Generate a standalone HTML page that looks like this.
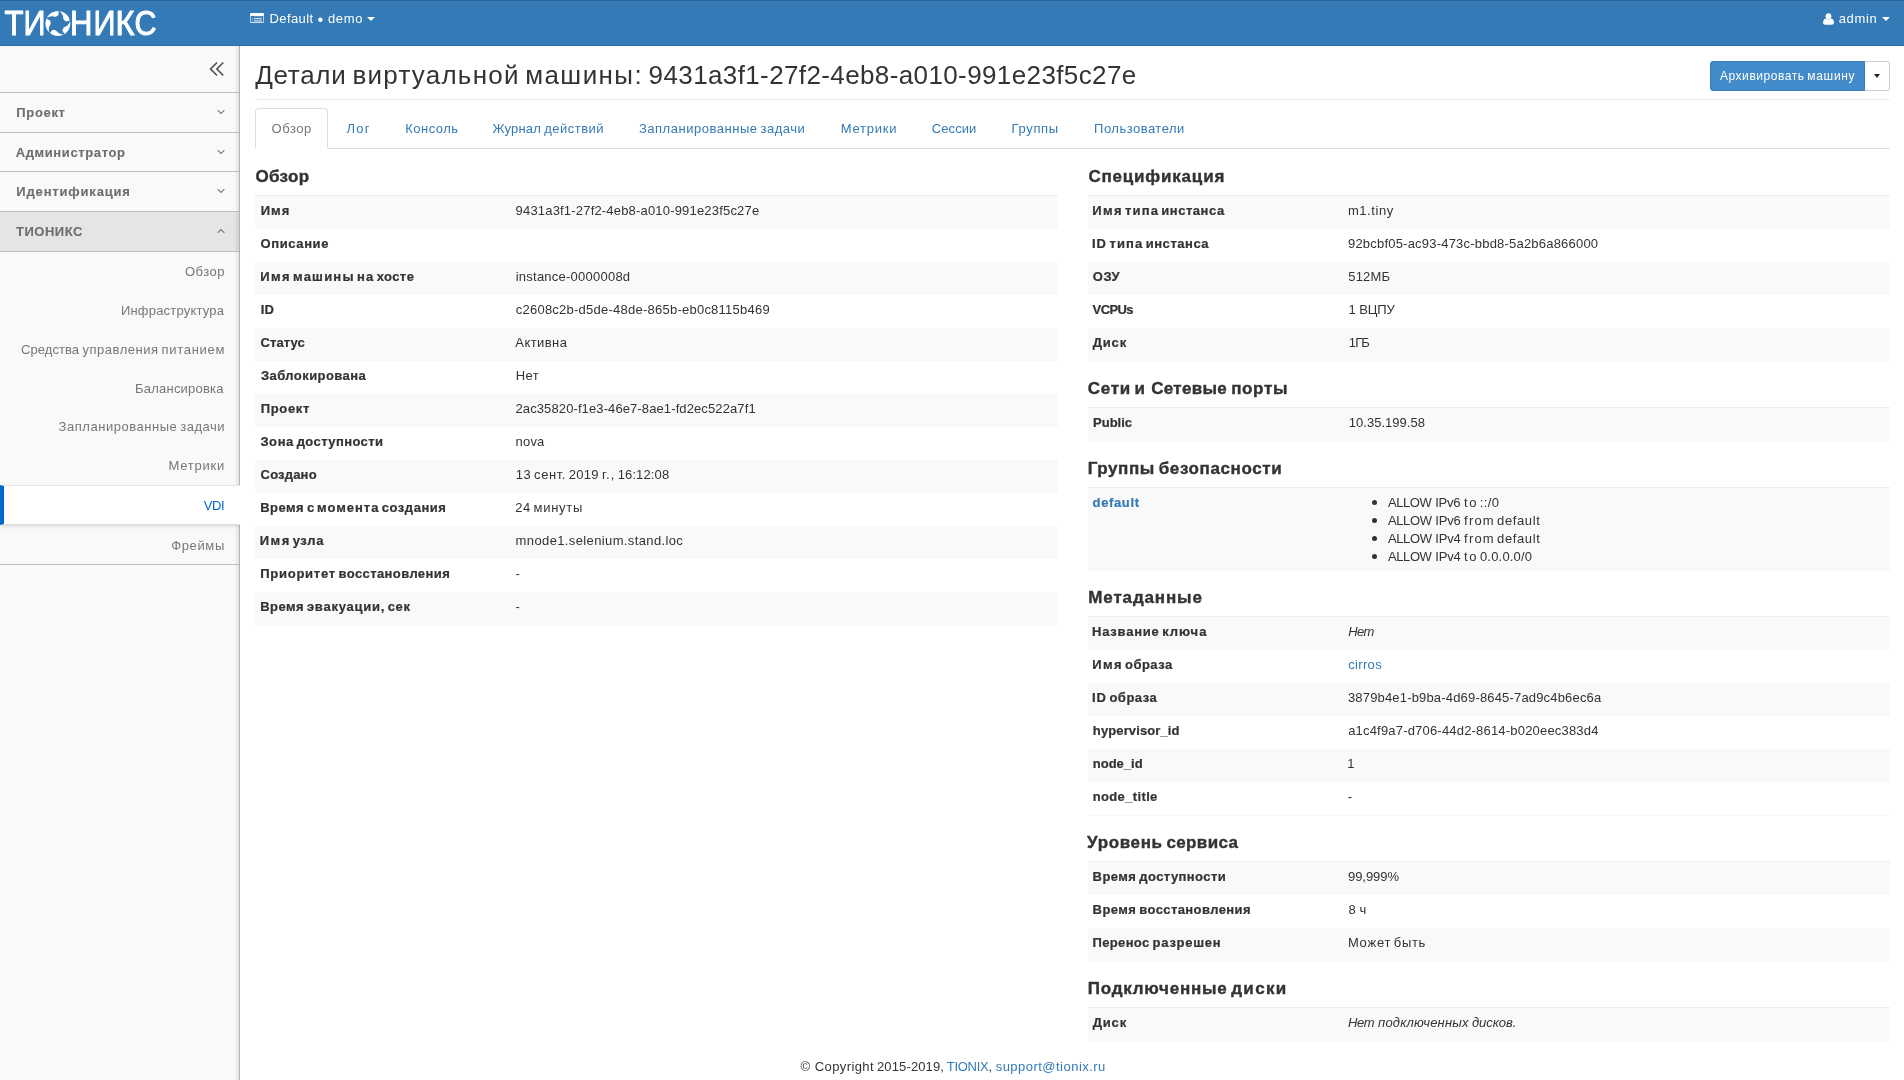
<!DOCTYPE html>
<html lang="ru"><head>
<meta charset="utf-8">
<title>Детали виртуальной машины</title>
<style>
*{box-sizing:border-box;}
html,body{margin:0;padding:0;}
body{will-change:transform;width:1904px;height:1080px;overflow:hidden;background:#fff;color:#333;font-family:"Liberation Sans",sans-serif;font-size:13px;line-height:18px;position:relative;}
a{color:#337ab7;text-decoration:none;}
.f,.fr{position:absolute;white-space:nowrap;line-height:18px;}
.fr{text-align:right;}
#nav{position:absolute;left:0;top:0;width:1904px;height:46px;background:#337ab7;border-bottom:1px solid #2e6da4;border-top:1px solid #2b669a;color:#fff;}
#logo{position:absolute;left:0;top:0;}
.caret{position:absolute;width:0;height:0;border-top:4px solid currentColor;border-left:4px solid transparent;border-right:4px solid transparent;}
#side{position:absolute;left:0;top:46px;width:240px;height:1034px;background:#f9f9f9;overflow:hidden;}
#sbd{position:absolute;left:234px;top:0;width:6px;height:1034px;border-right:1px solid #b4b4b4;background:linear-gradient(to right,rgba(0,0,0,0),rgba(0,0,0,.09));}
#side .tog{position:absolute;left:209px;top:15px;}
.ln{position:absolute;left:0;width:239px;height:1px;background:#bdbdbd;}
.grp{font-weight:bold;color:#6e6e6e;-webkit-text-stroke:.12px;}
.chev{position:absolute;left:217px;}
#open{position:absolute;left:0;top:166px;width:239px;height:39px;background:#e4e5e7;}
.itm{color:#777;}
#act{position:absolute;left:0;top:439px;width:240px;height:40px;background:#fff;border-left:4px solid #0068cc;border-top:1px solid #e8e8e8;border-bottom:1px solid #dcdcdc;box-shadow:0 2px 3px rgba(0,0,0,.10);}
#main{position:absolute;left:0;top:0;width:1904px;height:1080px;}
h1{position:absolute;left:0;top:0;margin:0;font-weight:normal;font-size:26px;color:#333;}
h1 .f{line-height:36px;}
.hr{position:absolute;left:255px;width:1635px;height:1px;background:#eee;}
#b1{position:absolute;left:1710px;top:61px;width:155px;height:30px;background:#428bca;border:1px solid #357ebd;border-radius:3px 0 0 3px;}
#b1t{color:#fff;font-size:12px;}
#b2{position:absolute;left:1865px;top:61px;width:25px;height:30px;background:#fff;border:1px solid #ccc;border-left:0;border-radius:0 3px 3px 0;}
#b2 i{position:absolute;left:9px;top:12px;width:0;height:0;border-top:4px solid #222;border-left:3.7px solid transparent;border-right:3.7px solid transparent;}
#tabon{position:absolute;left:255px;top:108px;width:73px;height:41px;border:1px solid #ddd;border-bottom:1px solid #fff;border-radius:4px 4px 0 0;background:#fff;}
.tab{color:#337ab7;}
h4{margin:0;font-size:17px;font-weight:bold;color:#333;-webkit-text-stroke:.4px;}
h4.f{line-height:24px;}
.row{position:absolute;width:802px;}
.row.s{background:#f9f9f9;}
.tl{position:absolute;width:802px;height:1px;background:#eee;}
.k{font-weight:bold;-webkit-text-stroke:.22px;}
i{font-style:italic;}
ul{position:absolute;margin:0;padding:0;list-style:none;}
.dot{position:absolute;width:5.4px;height:5.4px;border-radius:50%;background:#333;}
</style>
</head>
<body>
<div id="nav">
<svg id="logo" width="170" height="45" viewBox="0 0 170 45" role="img" aria-label="ТИОНИКС"><title>ТИОНИКС</title>
<g fill="#fff" stroke="#fff" stroke-width="1" stroke-linejoin="round" font-family="Liberation Sans, sans-serif" font-size="34.6">
<text x="4.6" y="34.4" textLength="19" lengthAdjust="spacingAndGlyphs">Т</text>
<text x="23.4" y="34.4" textLength="22" lengthAdjust="spacingAndGlyphs">И</text>
<text x="70" y="34.4" textLength="22.4" lengthAdjust="spacingAndGlyphs">Н</text>
<text x="93.4" y="34.4" textLength="22" lengthAdjust="spacingAndGlyphs">И</text>
<text x="115.5" y="34.4" textLength="19" lengthAdjust="spacingAndGlyphs">К</text>
<text x="134.6" y="34.4" textLength="22" lengthAdjust="spacingAndGlyphs">С</text>
</g>
<path fill="#fff" d="M59.58 10.22 L60.48 10.38 L61.37 10.61 L62.24 10.90 L63.09 11.26 L63.91 11.68 L64.69 12.16 L65.44 12.70 L66.15 13.29 L66.81 13.93 L67.42 14.61 L67.98 15.34 L68.48 16.11 L68.92 16.92 L69.31 17.75 L69.63 18.62 L69.88 19.50 L65.90 20.49 L65.42 20.01 L64.90 19.58 L64.45 19.17 L64.03 18.79 L63.58 18.45 L63.45 17.89 L63.30 17.28 L63.23 16.52 L63.12 15.69 L62.91 14.86 L62.59 14.03 L62.18 13.22 L61.67 12.42 L61.06 11.65 L60.37 10.91 L59.58 10.22Z M70.06 20.35 L70.19 21.26 L70.25 22.18 L70.24 23.09 L70.16 24.01 L70.01 24.92 L69.80 25.81 L69.52 26.69 L69.18 27.54 L68.77 28.37 L68.31 29.16 L67.79 29.92 L67.21 30.64 L66.58 31.31 L65.90 31.93 L65.18 32.50 L64.42 33.02 L62.25 29.54 L62.56 28.92 L62.81 28.30 L63.05 27.75 L63.29 27.23 L63.48 26.70 L63.97 26.40 L64.49 26.07 L65.20 25.77 L65.95 25.41 L66.68 24.95 L67.37 24.39 L68.02 23.75 L68.62 23.02 L69.16 22.20 L69.65 21.31 L70.06 20.35Z M63.67 33.45 L62.84 33.85 L61.99 34.19 L61.11 34.46 L60.22 34.67 L59.31 34.81 L58.39 34.89 L57.47 34.89 L56.55 34.83 L55.64 34.70 L54.75 34.51 L53.86 34.24 L53.00 33.91 L52.17 33.52 L51.37 33.07 L50.61 32.56 L49.88 32.00 L52.51 28.86 L53.20 28.97 L53.86 29.01 L54.47 29.07 L55.03 29.13 L55.59 29.15 L56.03 29.52 L56.51 29.92 L57.01 30.50 L57.59 31.10 L58.25 31.66 L58.99 32.14 L59.80 32.55 L60.69 32.90 L61.63 33.17 L62.63 33.35 L63.67 33.45Z M49.24 31.42 L48.60 30.76 L48.01 30.05 L47.48 29.30 L47.00 28.51 L46.59 27.69 L46.24 26.84 L45.95 25.97 L45.72 25.08 L45.56 24.17 L45.47 23.26 L45.45 22.34 L45.50 21.42 L45.61 20.51 L45.79 19.61 L46.04 18.72 L46.35 17.85 L50.15 19.39 L50.26 20.07 L50.43 20.72 L50.56 21.31 L50.67 21.87 L50.83 22.41 L50.61 22.94 L50.38 23.52 L49.98 24.17 L49.59 24.91 L49.26 25.71 L49.03 26.56 L48.89 27.47 L48.84 28.41 L48.87 29.39 L49.00 30.40 L49.24 31.42Z M46.70 17.06 L47.14 16.25 L47.63 15.48 L48.18 14.74 L48.78 14.04 L49.43 13.39 L50.13 12.80 L50.87 12.25 L51.65 11.76 L52.46 11.33 L53.31 10.96 L54.17 10.66 L55.06 10.42 L55.96 10.24 L56.88 10.14 L57.80 10.10 L58.71 10.13 L58.43 14.22 L57.82 14.53 L57.25 14.89 L56.73 15.20 L56.23 15.48 L55.77 15.79 L55.19 15.75 L54.57 15.71 L53.83 15.53 L53.01 15.39 L52.14 15.33 L51.26 15.37 L50.36 15.51 L49.44 15.75 L48.52 16.09 L47.61 16.53 L46.70 17.06Z"></path>
</svg>
<svg style="position:absolute;left:250px;top:11.700px" width="14" height="10.700" viewBox="0 0 14 10.700"><rect x=".45" y=".45" width="13.100" height="9.800" rx="1.200" fill="none" stroke="#fff" stroke-width=".9" stroke-opacity=".7"></rect><rect x=".15" y="0" width="13.700" height="2.900" rx="1" fill="#fff"></rect><rect x=".6" y="9.300" width="12.800" height="1.400" rx=".6" fill="#fff"></rect><rect x="4" y="3.400" width="8" height=".8" fill="#fff" fill-opacity=".35"></rect><rect x="4" y="5.300" width="8" height=".9" fill="#fff"></rect><rect x="4" y="7.500" width="8" height=".9" fill="#fff"></rect><rect x="1.900" y="5.300" width="1.200" height=".9" fill="#fff" fill-opacity=".6"></rect><rect x="1.900" y="7.500" width="1.200" height=".9" fill="#fff" fill-opacity=".6"></rect></svg>
<div id="ctx">
<span class="f" style="left: 269.46px; top: 9px; letter-spacing: 0.404px;">Default</span>
<span class="f" style="left: 317.39px; top: 9px; font-size: 16.5px;">•</span>
<span class="f" style="left: 327.92px; top: 9px; letter-spacing: 0.693px;">demo</span>
</div>
<i class="caret" style="left:367px;top:16px"></i>
<svg style="position:absolute;left:1823px;top:11.5px" width="11" height="12" viewBox="0 0 11 12"><circle cx="5.5" cy="3.200" r="2.900" fill="#fff"></circle><path d="M0 9.600C0 6.800 1.800 5.500 3 5.400c.7.600 1.500.9 2.500.9s1.800-.3 2.500-.9c1.200.100 3 1.400 3 4.200 0 1.500-1 2.200-2.200 2.200H2.200C1 11.800 0 11.100 0 9.600z" fill="#fff"></path></svg>
<div class="f" style="left: 1838.65px; top: 9px; letter-spacing: 0.658px;">admin</div>
<i class="caret" style="left:1881.500px;top:16px"></i>
</div>
<div id="side">
<svg class="tog" width="16" height="16" viewBox="0 0 16 16"><path d="M8 1.500L1.600 8 8 14.500M14.300 1.500L7.900 8l6.400 6.500" fill="none" stroke="#4d4d4d" stroke-width="1.600"></path></svg>
<div id="open"></div>
<div id="sbd"></div>
<div class="ln" style="top:46px"></div>
<div class="f grp" style="left: 16.34px; top: 58px; letter-spacing: 0.654px;">Проект</div>
<svg class="chev" style="top:63px" width="8" height="6" viewBox="0 0 8 6"><path d="M.6 1.200l3.400 3.300 3.400-3.300" fill="none" stroke="#777" stroke-width="1.100"></path></svg>
<div class="ln" style="top:86px"></div>
<div class="f grp" style="left: 15.64px; top: 98px; letter-spacing: 0.622px;">Администратор</div>
<svg class="chev" style="top:103px" width="8" height="6" viewBox="0 0 8 6"><path d="M.6 1.200l3.400 3.300 3.400-3.300" fill="none" stroke="#777" stroke-width="1.100"></path></svg>
<div class="ln" style="top:125px"></div>
<div class="f grp" style="left: 16.37px; top: 137px; letter-spacing: 0.818px;">Идентификация</div>
<svg class="chev" style="top:142px" width="8" height="6" viewBox="0 0 8 6"><path d="M.6 1.200l3.400 3.300 3.400-3.300" fill="none" stroke="#777" stroke-width="1.100"></path></svg>
<div class="ln" style="top:165px"></div>
<div class="f grp" style="left: 16.06px; top: 177px; letter-spacing: 0.491px;">ТИОНИКС</div>
<svg class="chev" style="top:182px" width="8" height="6" viewBox="0 0 8 6"><path d="M.6 4.800l3.400-3.300 3.400 3.300" fill="none" stroke="#777" stroke-width="1.100"></path></svg>
<div class="ln" style="top:205px"></div>
<div class="f itm" style="top: 217px; left: 184.89px; letter-spacing: 0.501px;">Обзор</div>
<div class="f itm" style="top: 256px; left: 120.93px; letter-spacing: 0.197px;">Инфраструктура</div>
<div class="f itm" style="top: 295px; left: 21.08px;"><span style="letter-spacing: 0.05px;">Средства</span> <span style="letter-spacing: 0.528px; margin-left: -0.281px;">управления</span> <span style="letter-spacing: 0.721px; margin-left: -0.781px;">питанием</span></div>
<div class="f itm" style="top: 334px; left: 135.03px; letter-spacing: 0.221px;">Балансировка</div>
<div class="f itm" style="top: 372px; left: 58.6px;"><span style="letter-spacing: 0.532px;">Запланированные</span> <span style="letter-spacing: 0.52px; margin-left: -0.781px;">задачи</span></div>
<div class="f itm" style="top: 411px; left: 168.46px; letter-spacing: 0.773px;">Метрики</div>
<div id="act">
</div>
<div class="f itm" style="top: 451px; color: rgb(0, 102, 204); left: 203.77px; letter-spacing: -0.441px;">VDI</div>
<div class="f itm" style="top: 491px; left: 171.26px; letter-spacing: 0.626px;">Фреймы</div>
<div class="ln" style="top:518px"></div>
</div>
<div id="main">
<h1>
<span class="f" style="left: 255.27px; top: 57px;"><span style="letter-spacing: 0.701px;">Детали</span> <span style="letter-spacing: 1.227px; margin-left: -1.172px;">виртуальной</span> <span style="letter-spacing: 1.406px; margin-left: -1.688px;">машины:</span></span>
<span class="f" style="left: 648.61px; top: 57px; letter-spacing: 0.383px;">9431a3f1-27f2-4eb8-a010-991e23f5c27e</span>
</h1>
<div id="b1"></div><div id="b2"><i></i></div>
<div class="f" style="left: 1719.92px; top: 66.5px; color: rgb(255, 255, 255); font-size: 12px;"><span style="letter-spacing: 0.558px;">Архивировать</span> <span style="letter-spacing: 0.701px; margin-left: -0.797px;">машину</span></div>
<div class="hr" style="top:99px"></div>
<div class="hr" style="top:148px;background:#ddd"></div>
<div id="tabon"></div>
<div class="f tab" style="left: 271.59px; top: 120px; color: rgb(119, 119, 119); letter-spacing: 0.547px;">Обзор</div>
<div class="f tab" style="left: 346.49px; top: 120px; letter-spacing: 1.256px;">Лог</div>
<div class="f tab" style="left: 405.23px; top: 120px; letter-spacing: 0.484px;">Консоль</div>
<div class="f tab" style="left: 492.5px; top: 120px;"><span style="letter-spacing: 0.172px;">Журнал</span> <span style="letter-spacing: 0.489px; margin-left: -0.422px;">действий</span></div>
<div class="f tab" style="left: 638.9px; top: 120px;"><span style="letter-spacing: 0.532px;">Запланированные</span> <span style="letter-spacing: 0.52px; margin-left: -0.781px;">задачи</span></div>
<div class="f tab" style="left: 840.81px; top: 120px; letter-spacing: 0.763px;">Метрики</div>
<div class="f tab" style="left: 931.81px; top: 120px; letter-spacing: 0.071px;">Сессии</div>
<div class="f tab" style="left: 1011.45px; top: 120px; letter-spacing: 0.682px;">Группы</div>
<div class="f tab" style="left: 1094.09px; top: 120px; letter-spacing: 0.484px;">Пользователи</div>
<h4 class="f" style="left: 255.38px; top: 164.5px; letter-spacing: 0.375px;">Обзор</h4>
<div class="tl" style="left:255px;top:195px;width:803px"></div>
<div class="row s" style="left:255px;top:196px;height:33px;width:803px"></div>
<div class="f k" style="left: 260.76px; top: 202px; letter-spacing: 0.963px;">Имя</div>
<div class="f" style="left: 515.6px; top: 202px; letter-spacing: 0.184px;">9431a3f1-27f2-4eb8-a010-991e23f5c27e</div>
<div class="f k" style="left: 260.6px; top: 235px; letter-spacing: 0.594px;">Описание</div>
<div class="row s" style="left:255px;top:262px;height:33px;width:803px"></div>
<div class="f k" style="left: 260.26px; top: 268px;"><span style="letter-spacing: 1.422px;">Имя</span> <span style="letter-spacing: 1.199px; margin-left: -1.657px;">машины</span> <span style="letter-spacing: 1.375px; margin-left: -1.422px;">на</span> <span style="letter-spacing: 0.405px; margin-left: -1.625px;">хосте</span></div>
<div class="f" style="left: 515.72px; top: 268px; letter-spacing: 0.237px;">instance-0000008d</div>
<div class="f k" style="left: 260.71px; top: 301px; letter-spacing: 0.17px;">ID</div>
<div class="f" style="left: 515.75px; top: 301px; letter-spacing: 0.24px;">c2608c2b-d5de-48de-865b-eb0c8115b469</div>
<div class="row s" style="left:255px;top:328px;height:33px;width:803px"></div>
<div class="f k" style="left: 260.6px; top: 334px; letter-spacing: 0.045px;">Статус</div>
<div class="f" style="left: 515.35px; top: 334px; letter-spacing: 0.418px;">Активна</div>
<div class="f k" style="left: 260.94px; top: 367px; letter-spacing: 0.432px;">Заблокирована</div>
<div class="f" style="left: 515.81px; top: 367px; letter-spacing: 0.347px;">Нет</div>
<div class="row s" style="left:255px;top:394px;height:33px;width:803px"></div>
<div class="f k" style="left: 260.72px; top: 400px; letter-spacing: 0.656px;">Проект</div>
<div class="f" style="left: 515.5px; top: 400px; letter-spacing: 0.107px;">2ac35820-f1e3-46e7-8ae1-fd2ec522a7f1</div>
<div class="f k" style="left: 260.4px; top: 433px;"><span style="letter-spacing: 0.587px;">Зона</span> <span style="letter-spacing: 0.409px; margin-left: -0.829px;">доступности</span></div>
<div class="f" style="left: 515.62px; top: 433px; letter-spacing: 0.18px;">nova</div>
<div class="row s" style="left:255px;top:460px;height:33px;width:803px"></div>
<div class="f k" style="left: 260.6px; top: 466px; letter-spacing: 0.181px;">Создано</div>
<div class="f" style="left: 515.83px; top: 466px;"><span style="letter-spacing: 0.406px;">13</span> <span style="letter-spacing: 0.562px; margin-left: -0.641px;">сент.</span> <span style="letter-spacing: 0.271px; margin-left: -0.812px;">2019</span> <span style="letter-spacing: 1px; margin-left: -0.5px;">г.,</span> <span style="letter-spacing: 0.118px; margin-left: -1.25px;">16:12:08</span></div>
<div class="f k" style="left: 260.28px; top: 499px;"><span style="letter-spacing: 0.434px;">Время</span> <span style="margin-left: -0.687px;">с</span> <span style="letter-spacing: 0.971px; margin-left: -0.781px;">момента</span> <span style="letter-spacing: 0.534px; margin-left: -1.219px;">создания</span></div>
<div class="f" style="left: 515.35px; top: 499px;"><span style="letter-spacing: 0.406px;">24</span> <span style="letter-spacing: 0.695px; margin-left: -0.641px;">минуты</span></div>
<div class="row s" style="left:255px;top:526px;height:33px;width:803px"></div>
<div class="f k" style="left: 259.85px; top: 532px;"><span style="letter-spacing: 1.422px;">Имя</span> <span style="letter-spacing: 0.672px; margin-left: -1.657px;">узла</span></div>
<div class="f" style="left: 515.62px; top: 532px; letter-spacing: 0.375px;">mnode1.selenium.stand.loc</div>
<div class="f k" style="left: 260.16px; top: 565px;"><span style="letter-spacing: 0.754px;">Приоритет</span> <span style="letter-spacing: 0.401px; margin-left: -1.015px;">восстановления</span></div>
<div class="f" style="left: 515.54px; top: 565px;">-</div>
<div class="row s" style="left:255px;top:592px;height:33px;width:803px"></div>
<div class="f k" style="left: 260.23px; top: 598px;"><span style="letter-spacing: 0.434px;">Время</span> <span style="letter-spacing: 0.748px; margin-left: -0.687px;">эвакуации,</span> <span style="letter-spacing: 0.721px; margin-left: -1px;">сек</span></div>
<div class="f" style="left: 515.54px; top: 598px;">-</div>
<div class="tl" style="left:255px;top:625px;width:803px;background:#f8f8f8"></div>
<h4 class="f" style="left: 1088.41px; top: 164.5px; letter-spacing: 0.808px;">Спецификация</h4>
<div class="tl" style="left:1088px;top:195px;width:802px"></div>
<div class="row s" style="left:1088px;top:196px;height:33px;width:802px"></div>
<div class="f k" style="left: 1092.21px; top: 202px;"><span style="letter-spacing: 1.422px;">Имя</span> <span style="letter-spacing: 1.148px; margin-left: -1.657px;">типа</span> <span style="letter-spacing: 0.529px; margin-left: -1.375px;">инстанса</span></div>
<div class="f" style="left: 1347.94px; top: 202px; letter-spacing: 0.561px;">m1.tiny</div>
<div class="f k" style="left: 1092.07px; top: 235px;"><span style="letter-spacing: 0.93px;">ID</span> <span style="letter-spacing: 1.148px; margin-left: -1.156px;">типа</span> <span style="letter-spacing: 0.529px; margin-left: -1.375px;">инстанса</span></div>
<div class="f" style="left: 1347.99px; top: 235px; letter-spacing: 0.206px;">92bcbf05-ac93-473c-bbd8-5a2b6a866000</div>
<div class="row s" style="left:1088px;top:262px;height:33px;width:802px"></div>
<div class="f k" style="left: 1092.86px; top: 268px; letter-spacing: 0.467px;">ОЗУ</div>
<div class="f" style="left: 1348.27px; top: 268px; letter-spacing: 0.195px;">512МБ</div>
<div class="f k" style="left: 1092.6px; top: 301px; letter-spacing: -0.634px;">VCPUs</div>
<div class="f" style="left: 1348.43px; top: 301px;"><span>1</span> <span style="letter-spacing: -0.14px; margin-left: -0.031px;">ВЦПУ</span></div>
<div class="row s" style="left:1088px;top:328px;height:33px;width:802px"></div>
<div class="f k" style="left: 1092.67px; top: 334px; letter-spacing: 0.848px;">Диск</div>
<div class="f" style="left: 1348.86px; top: 334px; letter-spacing: -0.9px;">1ГБ</div>
<div class="tl" style="left:1088px;top:361px;width:802px;background:#f8f8f8"></div>
<h4 class="f" style="left: 1087.63px; top: 376.5px;"><span style="letter-spacing: 0.749px;">Сети</span> <span style="margin-left: -1.063px;">и</span> <span style="letter-spacing: 0.299px; margin-left: 1.484px;">Сетевые</span> <span style="letter-spacing: 0.642px; margin-left: -0.61px;">порты</span></h4>
<div class="tl" style="left:1088px;top:407px;width:802px"></div>
<div class="row s" style="left:1088px;top:408px;height:33px;width:802px"></div>
<div class="f k" style="left: 1093.01px; top: 414px; letter-spacing: 0.015px;">Public</div>
<div class="f" style="left: 1348.86px; top: 414px; letter-spacing: 0.009px;">10.35.199.58</div>
<div class="tl" style="left:1088px;top:441px;width:802px;background:#f8f8f8"></div>
<h4 class="f" style="left: 1087.76px; top: 456.5px;"><span style="letter-spacing: 0.585px;">Группы</span> <span style="letter-spacing: 0.604px; margin-left: -0.891px;">безопасности</span></h4>
<div class="tl" style="left:1088px;top:487px;width:802px"></div>
<div class="row s" style="left:1088px;top:488px;height:82px;width:802px"></div>
<div class="f k" style="left: 1092.59px; top: 494px; letter-spacing: 0.641px;"><a>default</a></div>
<div class="dot" style="left:1371.8px;top:499.8px"></div>
<div class="f" style="left: 1387.9px; top: 494px;"><span style="letter-spacing: -0.398px;">ALLOW</span> <span style="letter-spacing: -0.212px; margin-left: 0.187px;">IPv6</span> <span style="letter-spacing: 1.625px; margin-left: -0.046px;">to</span> <span style="letter-spacing: 0.321px; margin-left: -1.875px;">::/0</span></div>
<div class="dot" style="left:1371.8px;top:517.8px"></div>
<div class="f" style="left: 1388px; top: 512px;"><span style="letter-spacing: -0.398px;">ALLOW</span> <span style="letter-spacing: -0.212px; margin-left: 0.187px;">IPv6</span> <span style="letter-spacing: 1.181px; margin-left: -0.046px;">from</span> <span style="letter-spacing: 0.619px; margin-left: -1.407px;">default</span></div>
<div class="dot" style="left:1371.8px;top:535.8px"></div>
<div class="f" style="left: 1388px; top: 530px;"><span style="letter-spacing: -0.398px;">ALLOW</span> <span style="letter-spacing: -0.212px; margin-left: 0.187px;">IPv4</span> <span style="letter-spacing: 1.181px; margin-left: -0.046px;">from</span> <span style="letter-spacing: 0.619px; margin-left: -1.407px;">default</span></div>
<div class="dot" style="left:1371.8px;top:553.8px"></div>
<div class="f" style="left: 1387.97px; top: 548px;"><span style="letter-spacing: -0.398px;">ALLOW</span> <span style="letter-spacing: -0.212px; margin-left: 0.187px;">IPv4</span> <span style="letter-spacing: 1.625px; margin-left: -0.046px;">to</span> <span style="letter-spacing: 0.197px; margin-left: -1.875px;">0.0.0.0/0</span></div>
<div class="tl" style="left:1088px;top:570px;width:802px;background:#f8f8f8"></div>
<h4 class="f" style="left: 1088.33px; top: 585.5px; letter-spacing: 0.849px;">Метаданные</h4>
<div class="tl" style="left:1088px;top:616px;width:802px"></div>
<div class="row s" style="left:1088px;top:617px;height:33px;width:802px"></div>
<div class="f k" style="left: 1092.05px; top: 623px;"><span style="letter-spacing: 0.763px;">Название</span> <span style="letter-spacing: 0.977px; margin-left: -1.015px;">ключа</span></div>
<div class="f" style="left: 1348.28px; top: 623px; letter-spacing: -0.574px;"><i>Нет</i></div>
<div class="f k" style="left: 1092.19px; top: 656px;"><span style="letter-spacing: 1.422px;">Имя</span> <span style="letter-spacing: 0.493px; margin-left: -1.657px;">образа</span></div>
<div class="f" style="left: 1348.26px; top: 656px; letter-spacing: 0.324px;"><a>cirros</a></div>
<div class="row s" style="left:1088px;top:683px;height:33px;width:802px"></div>
<div class="f k" style="left: 1092.08px; top: 689px;"><span style="letter-spacing: 0.93px;">ID</span> <span style="letter-spacing: 0.493px; margin-left: -1.156px;">образа</span></div>
<div class="f" style="left: 1347.94px; top: 689px; letter-spacing: 0.173px;">3879b4e1-b9ba-4d69-8645-7ad9c4b6ec6a</div>
<div class="f k" style="left: 1092.85px; top: 722px; letter-spacing: 0.12px;">hypervisor_id</div>
<div class="f" style="left: 1348.14px; top: 722px; letter-spacing: 0.192px;">a1c4f9a7-d706-44d2-8614-b020eec383d4</div>
<div class="row s" style="left:1088px;top:749px;height:33px;width:802px"></div>
<div class="f k" style="left: 1092.73px; top: 755px; letter-spacing: 0.014px;">node_id</div>
<div class="f" style="left: 1347.37px; top: 755px;">1</div>
<div class="f k" style="left: 1092.7px; top: 788px; letter-spacing: 0.363px;">node_title</div>
<div class="f" style="left: 1347.81px; top: 788px;">-</div>
<div class="tl" style="left:1088px;top:815px;width:802px;background:#f8f8f8"></div>
<h4 class="f" style="left: 1087.08px; top: 830.5px;"><span style="letter-spacing: 0.647px;">Уровень</span> <span style="letter-spacing: 0.362px; margin-left: -0.969px;">сервиса</span></h4>
<div class="tl" style="left:1088px;top:861px;width:802px"></div>
<div class="row s" style="left:1088px;top:862px;height:33px;width:802px"></div>
<div class="f k" style="left: 1092.62px; top: 868px;"><span style="letter-spacing: 0.434px;">Время</span> <span style="letter-spacing: 0.409px; margin-left: -0.687px;">доступности</span></div>
<div class="f" style="left: 1347.99px; top: 868px; letter-spacing: -0.055px;">99,999%</div>
<div class="f k" style="left: 1092.6px; top: 901px;"><span style="letter-spacing: 0.434px;">Время</span> <span style="letter-spacing: 0.401px; margin-left: -0.687px;">восстановления</span></div>
<div class="f" style="left: 1348.62px; top: 901px;"><span>8</span> <span style="margin-left: -0.031px;">ч</span></div>
<div class="row s" style="left:1088px;top:928px;height:33px;width:802px"></div>
<div class="f k" style="left: 1092.6px; top: 934px;"><span style="letter-spacing: 0.336px;">Перенос</span> <span style="letter-spacing: 0.743px; margin-left: -0.594px;">разрешен</span></div>
<div class="f" style="left: 1347.9px; top: 934px;"><span style="letter-spacing: 0.746px;">Может</span> <span style="letter-spacing: 0.665px; margin-left: -0.984px;">быть</span></div>
<div class="tl" style="left:1088px;top:961px;width:802px;background:#f8f8f8"></div>
<h4 class="f" style="left: 1087.71px; top: 976.5px;"><span style="letter-spacing: 0.791px;">Подключенные</span> <span style="letter-spacing: 1.345px; margin-left: -1.094px;">диски</span></h4>
<div class="tl" style="left:1088px;top:1007px;width:802px"></div>
<div class="row s" style="left:1088px;top:1008px;height:33px;width:802px"></div>
<div class="f k" style="left: 1092.67px; top: 1014px; letter-spacing: 0.846px;">Диск</div>
<div class="f" style="left: 1348.05px; top: 1014px;"><i><span style="letter-spacing: -0.328px;">Нет</span> <span style="letter-spacing: 0.167px; margin-left: 0.109px;">подключенных</span> <span style="letter-spacing: -0.031px; margin-left: -0.407px;">дисков.</span></i></div>
<div class="tl" style="left:1088px;top:1041px;width:802px;background:#f8f8f8"></div>
<div id="foot">
<span class="f" style="left: 800.6px; top: 1058px;"><span>©</span> <span style="letter-spacing: 0.389px; margin-left: 1px;">Copyright</span> <span style="letter-spacing: 0.137px; margin-left: -0.625px;">2015-2019,</span></span>
<span class="f" style="left: 946.74px; top: 1058px; letter-spacing: -0.278px;"><a>TIONIX</a>,</span>
<span class="f" style="left: 995.69px; top: 1058px; letter-spacing: 0.473px;"><a>support@tionix.ru</a></span>
</div>
</div>


</body></html>
